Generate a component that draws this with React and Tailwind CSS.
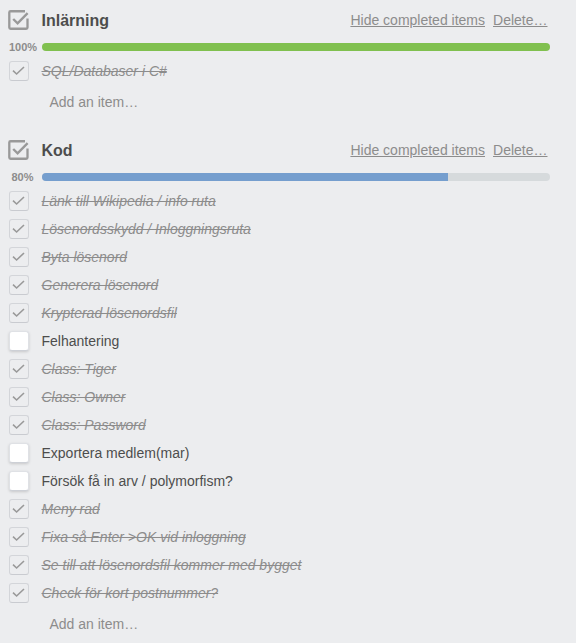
const checklists = [
  {
    title: "Inlärning",
    percent: 100,
    items: [{ text: "SQL/Databaser i C#", done: true }],
  },
  {
    title: "Kod",
    percent: 80,
    items: [
      { text: "Länk till Wikipedia / info ruta", done: true },
      { text: "Lösenordsskydd / Inloggningsruta", done: true },
      { text: "Byta lösenord", done: true },
      { text: "Generera lösenord", done: true },
      { text: "Krypterad lösenordsfil", done: true },
      { text: "Felhantering", done: false },
      { text: "Class: Tiger", done: true },
      { text: "Class: Owner", done: true },
      { text: "Class: Password", done: true },
      { text: "Exportera medlem(mar)", done: false },
      { text: "Försök få in arv / polymorfism?", done: false },
      { text: "Meny rad", done: true },
      { text: "Fixa så Enter >OK vid inloggning", done: true },
      { text: "Se till att lösenordsfil kommer med bygget", done: true },
      { text: "Check för kort postnummer?", done: true },
    ],
  },
];

function ChecklistIcon() {
  return (
    <svg className="block h-5 w-[21px]" viewBox="0 0 21 20" fill="none" stroke="#999999">
      <path d="M17 1.25H2.6Q1.3 1.25 1.3 2.5V17.5Q1.3 18.75 2.6 18.75H18.2Q19.5 18.75 19.5 17.5V8.6" strokeWidth="2.3" />
      <path d="M5.2 9L9.6 13.4L19.6 3.2" strokeWidth="2.4" />
    </svg>
  );
}

function Checkbox({ done }) {
  if (!done) {
    return (
      <span className="block h-5 w-5 rounded-[3px] border border-[#dfe1e5] border-b-[#cdd0d6] bg-white shadow-[0_1px_3px_rgba(0,0,0,0.16)]" />
    );
  }
  return (
    <span className="block h-5 w-5 rounded-[3px] border border-[#d3d5d9] border-b-[#c9cbd0]">
      <svg className="block h-[18px] w-[18px]" viewBox="0 0 18 18" fill="none" stroke="#999999" strokeWidth="1.6">
        <path d="M3 8.7L6.6 12L14 5" />
      </svg>
    </span>
  );
}

function Item({ text, done }) {
  return (
    <li className="flex h-7 items-center">
      <span className="w-[32.5px] shrink-0">
        <Checkbox done={done} />
      </span>
      <span className={done ? "italic text-[#8c8c8c] line-through" : "text-[#4d4d4d]"}>{text}</span>
    </li>
  );
}

function Checklist({ title, percent, items }) {
  return (
    <section className="h-[130px] pl-[9px] pr-[26px]">
      <header className="flex h-10 items-center">
        <span className="-ml-px w-[33.5px] shrink-0">
          <ChecklistIcon />
        </span>
        <h3 className="flex-1 pt-0.5 text-base font-bold">{title}</h3>
        <div className="flex gap-2 pr-[2.5px] text-[#8c8c8c]">
          <a className="underline">Hide completed items</a>
          <a className="underline">Delete…</a>
        </div>
      </header>
      <div className="flex h-[14px] items-center">
        <span className="w-[33px] shrink-0 pr-[6px] text-center text-[11px] font-bold leading-[14px] text-[#8c8c8c]">
          {percent}%
        </span>
        <div className="h-2 flex-1 overflow-hidden rounded-full bg-[#d6dadc]">
          <div
            className={percent === 100 ? "h-full bg-[#80c04f]" : "h-full bg-[#759ece]"}
            style={{ width: `${percent}%` }}
          />
        </div>
      </div>
      <ul className="mt-[3px]">
        {items.map((item) => (
          <Item key={item.text} {...item} />
        ))}
      </ul>
      <p className="mt-2 pl-[40.5px] leading-[18px] text-[#8c8c8c]">Add an item…</p>
    </section>
  );
}

export default function App() {
  return (
    <main className="h-[643px] w-[576px] overflow-hidden bg-[#ecedef] font-['Liberation_Sans',Arial,sans-serif] text-sm text-[#4d4d4d]">
      {checklists.map((list) => (
        <Checklist key={list.title} {...list} />
      ))}
    </main>
  );
}
